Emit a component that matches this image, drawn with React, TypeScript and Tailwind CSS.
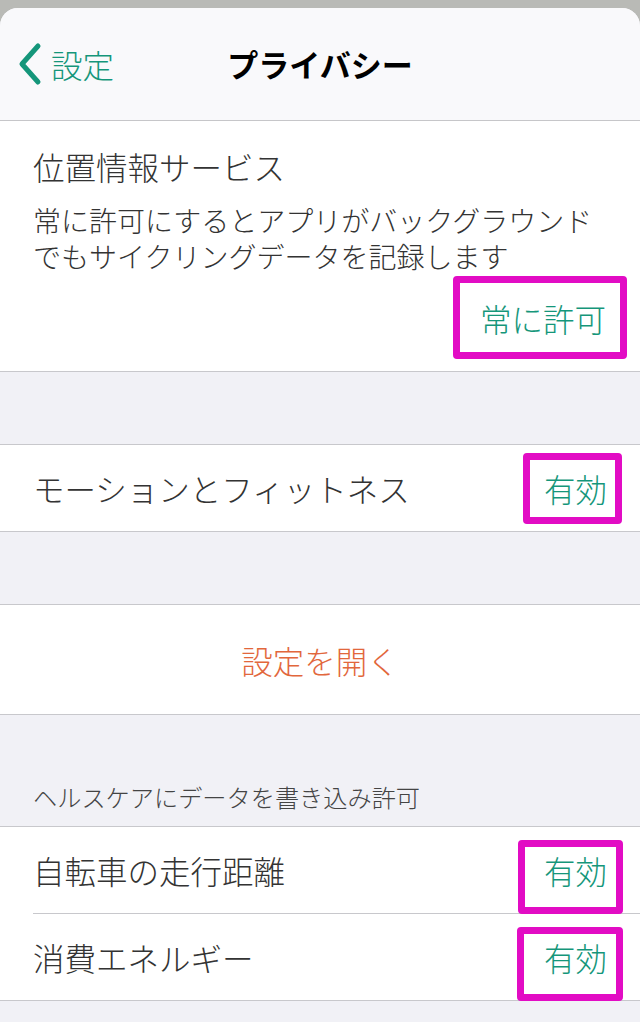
import React from 'react';

const font = { fontFamily: '"Noto Sans CJK JP", "Noto Sans", sans-serif' };

const Value: React.FC<{ text: string; box: string }> = ({ text, box }) => (
  <span className="relative inline-block text-[31.5px] font-light leading-[40px] text-[#15967a]">
    {text}
    <span className={`absolute rounded-[4px] border-[7px] border-[#e20cc4] ${box}`} />
  </span>
);

const Row: React.FC<{ label: string; value: string; box: string; h: string }> = ({ label, value, box, h }) => (
  <div className={`flex items-center justify-between pl-[33px] pr-[33px] ${h}`}>
    <span className="text-[31.5px] font-light leading-[40px] text-[#333333]">{label}</span>
    <Value text={value} box={box} />
  </div>
);

export default function App() {
  return (
    <div style={font} className="min-h-screen bg-[#b9bab6] pt-2">
      <div className="min-h-[1014px] overflow-hidden rounded-t-[18px] bg-[#f1f1f6]">
        {/* nav bar */}
        <header className="h-[113px] border-b border-[#c6c6c9] bg-[#f9f9fb] pt-[26px]">
          <div className="grid h-[60px] grid-cols-[1fr_auto_1fr] items-center">
            <div className="flex items-center pl-[17px] text-[#15967a]">
              <svg width="26" height="44" viewBox="0 0 26 44" fill="none">
                <path d="M21 4 L5 22 L21 40" stroke="#15967a" strokeWidth="5" strokeLinecap="round" strokeLinejoin="round" />
              </svg>
              <span className="ml-[8px] text-[31.5px] font-light leading-[40px]">設定</span>
            </div>
            <h1 className="text-[31px] font-bold leading-[40px] text-black">プライバシー</h1>
            <div />
          </div>
        </header>

        {/* location */}
        <section className="border-b border-[#c8c8cc] bg-white pb-[12px] pt-[25px]">
          <div className="px-[33px]">
            <div className="text-[31.5px] font-light leading-[40px] text-[#333333]">位置情報サービス</div>
            <p className="mt-[16px] text-[28px] font-light leading-[36px] text-[#333333]">
              常に許可にするとアプリがバックグラウンドでもサイクリングデータを記録します
            </p>
          </div>
          <div className="mt-[2px] flex justify-end pr-[13px]">
            <div className="flex h-[83px] items-center rounded-[4px] border-[7px] border-[#e20cc4] pl-[20px] pr-[14px]">
              <span className="text-[31.5px] font-light leading-[40px] text-[#15967a]">常に許可</span>
            </div>
          </div>
        </section>

        <div className="h-[72px]" />

        <section className="border-y border-[#c8c8cc] bg-white">
          <Row label="モーションとフィットネス" value="有効" h="h-[86px]" box="-left-[21px] -right-[15px] -top-[15px] -bottom-[16px]" />
        </section>

        <div className="h-[72px]" />

        <section className="border-y border-[#c8c8cc] bg-white">
          <div className="flex h-[109px] items-center justify-center">
            <span className="text-[31.5px] font-light leading-[40px] text-[#e2673c]">設定を開く</span>
          </div>
        </section>

        <div className="px-[33px] pb-[13px] pt-[66px] text-[24.2px] font-light leading-[32px] text-[#444444]">
          ヘルスケアにデータを書き込み許可
        </div>

        <section className="border-y border-[#c8c8cc] bg-white">
          <Row label="自転車の走行距離" value="有効" h="h-[86px]" box="-left-[26px] -right-[16px] -top-[10px] -bottom-[24px]" />
          <div className="ml-[33px] border-t border-[#c8c8cc]" />
          <Row label="消費エネルギー" value="有効" h="h-[86px]" box="-left-[27px] -right-[16px] -top-[10px] -bottom-[24px]" />
        </section>
      </div>
    </div>
  );
}
